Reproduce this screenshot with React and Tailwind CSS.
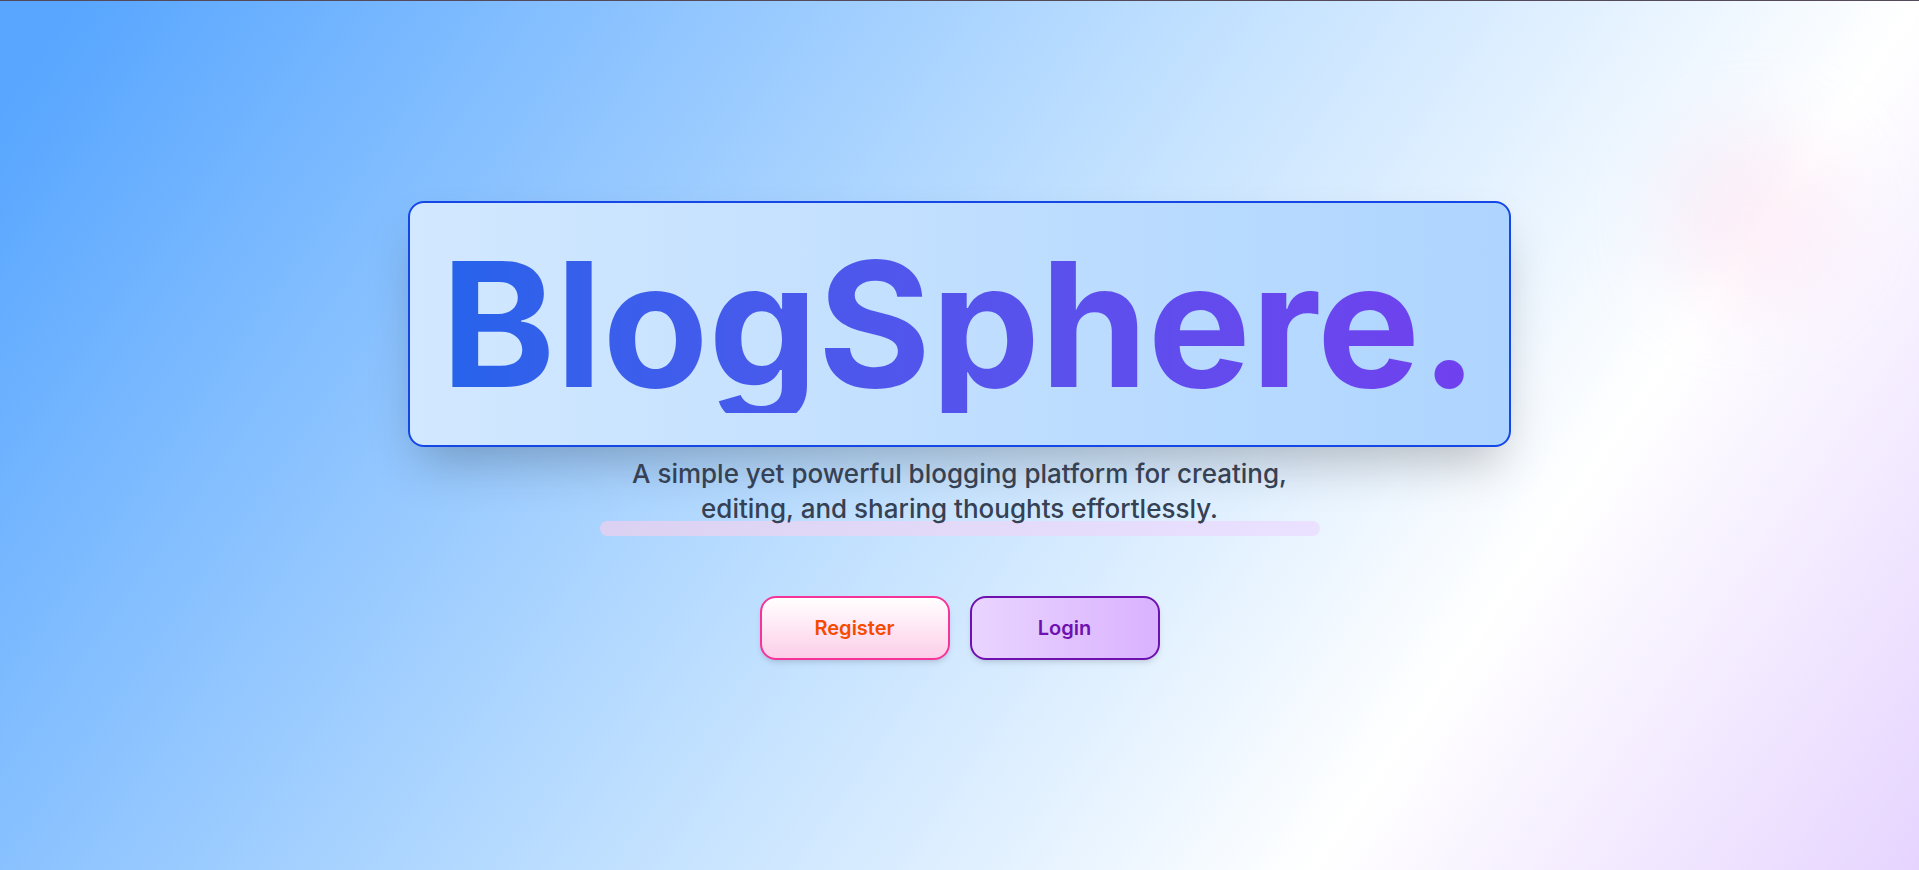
import React from 'react';

export default function App() {
    return (
        <main className="relative flex min-h-screen flex-col items-center overflow-hidden border-t border-[#544a5a] bg-[linear-gradient(125deg,#58a6ff_3%,#bedfff_47%,#ffffff_76%,#e6d4ff_100%)] pt-50 font-['Inter',sans-serif]">
            {/* soft glow in the corner */}
            <div className="absolute top-32 right-20 size-44 rounded-full bg-pink-200/30 blur-2xl"></div>

            <div className="rounded-2xl border-2 border-blue-700 bg-linear-to-r from-[#d2e8ff] to-[#aed5ff] px-[31px] py-8 shadow-2xl">
                <h1 className="bg-linear-to-r from-[#2563eb] to-[#7040ee] bg-clip-text text-[173px] leading-[178px] font-bold text-transparent">
                    BlogSphere.
                </h1>
            </div>

            <div className="relative mt-[9px] w-[720px] max-w-full">
                <div className="absolute bottom-0 h-[15px] w-full rounded-lg bg-linear-to-r from-pink-200/60 to-purple-200/60"></div>
                <p className="relative px-8 pb-[10px] text-center text-[26px] leading-[35px] font-medium text-gray-700">
                    A simple yet powerful blogging platform for creating, editing, and sharing thoughts effortlessly.
                </p>
            </div>

            <div className="mt-15 flex gap-5">
                <button className="h-16 w-[190px] rounded-2xl border-2 border-pink-500 bg-linear-to-b from-white to-pink-200 text-xl font-semibold text-orange-600 shadow-md">
                    Register
                </button>
                <button className="h-16 w-[190px] rounded-2xl border-2 border-purple-800 bg-linear-to-r from-purple-200 to-purple-300 text-xl font-semibold text-purple-800 shadow-md">
                    Login
                </button>
            </div>
        </main>
    );
}
